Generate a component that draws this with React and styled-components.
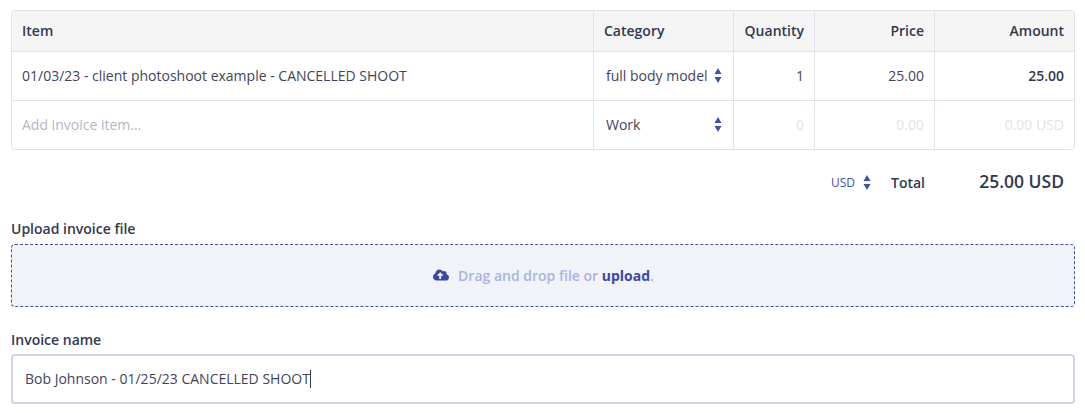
import React from 'react';
import styled, { createGlobalStyle } from 'styled-components';
import { FaCloudUploadAlt } from 'react-icons/fa';

const GlobalStyle = createGlobalStyle`
  html, body {
    margin: 0;
    padding: 0;
    background: #fff;
  }
  body {
    font-family: "Open Sans", "Noto Sans", sans-serif;
    font-size: 14px;
    color: #33384f;
  }
`;

const Page = styled.div`
  box-sizing: border-box;
  width: 1085px;
  height: 413px;
  padding: 10px 10px 0 11px;
  overflow: hidden;
`;

const Table = styled.div`
  border: 1px solid #e1e2ec;
  border-radius: 4px;
  overflow: hidden;
`;

const Row = styled.div`
  display: grid;
  grid-template-columns: 581px 140px 81px 120px 1fr;
  height: ${(p) => (p.$head ? '41px' : p.$last ? '48px' : '49px')};
  background: ${(p) => (p.$head ? '#f5f5f6' : '#fff')};
  border-bottom: ${(p) => (p.$last ? 'none' : '1px solid #e1e2ec')};
  box-sizing: border-box;
  font-weight: ${(p) => (p.$head ? 600 : 400)};
  color: ${(p) => (p.$head ? '#33384f' : '#3f445b')};
`;

const Cell = styled.div`
  display: flex;
  align-items: center;
  justify-content: ${(p) => (p.$right ? 'flex-end' : 'flex-start')};
  padding: 0 10px 1px;
  border-left: ${(p) => (p.$first ? 'none' : '1px solid #e1e2ec')};
  color: ${(p) => p.$color || 'inherit'};
  font-weight: ${(p) => (p.$bold ? 600 : 'inherit')};
  white-space: nowrap;
  min-width: 0;
`;

const SelectCell = styled(Cell)`
  justify-content: space-between;
  padding: 0 11px 1px 12px;
`;

const Totals = styled.div`
  display: flex;
  align-items: center;
  justify-content: flex-end;
  height: 27px;
  margin-top: 19px;
  padding-right: 11px;
`;

const Currency = styled.span`
  display: flex;
  align-items: center;
  gap: 8px;
  font-size: 12px;
  color: #3f51ae;
`;

const TotalLabel = styled.span`
  margin-left: 20px;
  width: 86px;
  font-weight: 600;
`;

const TotalValue = styled.span`
  width: 87px;
  margin-top: -3px;
  text-align: right;
  font-size: 17.5px;
  font-weight: 600;
  white-space: nowrap;
`;

const Label = styled.div`
  font-weight: 600;
  line-height: 18px;
  margin-top: 24px;
  margin-bottom: ${(p) => p.$gap};
`;

const DropZone = styled.div`
  box-sizing: border-box;
  height: 63px;
  padding: 0 0 1px 1px;
  display: flex;
  align-items: center;
  justify-content: center;
  gap: 9px;
  background: #f2f3f9;
  border: 1px dashed #3f51ae;
  border-radius: 4px;
  color: #a9b4df;
  font-weight: 600;

  svg {
    color: #3949a3;
    font-size: 16px;
  }
`;

const UploadLink = styled.span`
  color: #3949a3;
  font-weight: 700;
`;

const NameField = styled.div`
  box-sizing: border-box;
  height: 50px;
  display: flex;
  align-items: center;
  padding: 0 12px 1px;
  border: 2px solid #cdd4ec;
  border-radius: 4px;
  background: #fff;
  color: #3f445b;
`;

const Caret = styled.span`
  width: 1px;
  height: 18px;
  background: #33384f;
`;

const Stepper = () => (
  <svg width="8" height="15" viewBox="0 0 8 15" fill="#3f51ae" style={{ flexShrink: 0 }}>
    <path d="M4 0 7.500 6H.5z" />
    <path d="M4 15 .5 9h7z" />
  </svg>
);

const App = () => (
  <Page>
    <GlobalStyle />
    <Table>
      <Row $head>
        <Cell $first>Item</Cell>
        <Cell>Category</Cell>
        <Cell $right>Quantity</Cell>
        <Cell $right>Price</Cell>
        <Cell $right>Amount</Cell>
      </Row>
      <Row>
        <Cell $first>01/03/23 - client photoshoot example - CANCELLED SHOOT</Cell>
        <SelectCell>
          full body model
          <Stepper />
        </SelectCell>
        <Cell $right>1</Cell>
        <Cell $right>25.00</Cell>
        <Cell $right $bold $color="#33384f">25.00</Cell>
      </Row>
      <Row $last>
        <Cell $first $color="#b3b6c6">Add invoice item...</Cell>
        <SelectCell>
          Work
          <Stepper />
        </SelectCell>
        <Cell $right $color="#e2e3ea">0</Cell>
        <Cell $right $color="#e2e3ea">0.00</Cell>
        <Cell $right $color="#e2e3ea">0.00 USD</Cell>
      </Row>
    </Table>
    <Totals>
      <Currency>
        USD
        <Stepper />
      </Currency>
      <TotalLabel>Total</TotalLabel>
      <TotalValue>25.00 USD</TotalValue>
    </Totals>
    <Label $gap="6px">Upload invoice file</Label>
    <DropZone>
      <FaCloudUploadAlt />
      <span>
        Drag and drop file or <UploadLink>upload</UploadLink>.
      </span>
    </DropZone>
    <Label $gap="5px">Invoice name</Label>
    <NameField>
      Bob Johnson - 01/25/23 CANCELLED SHOOT
      <Caret />
    </NameField>
  </Page>
);

export default App;
